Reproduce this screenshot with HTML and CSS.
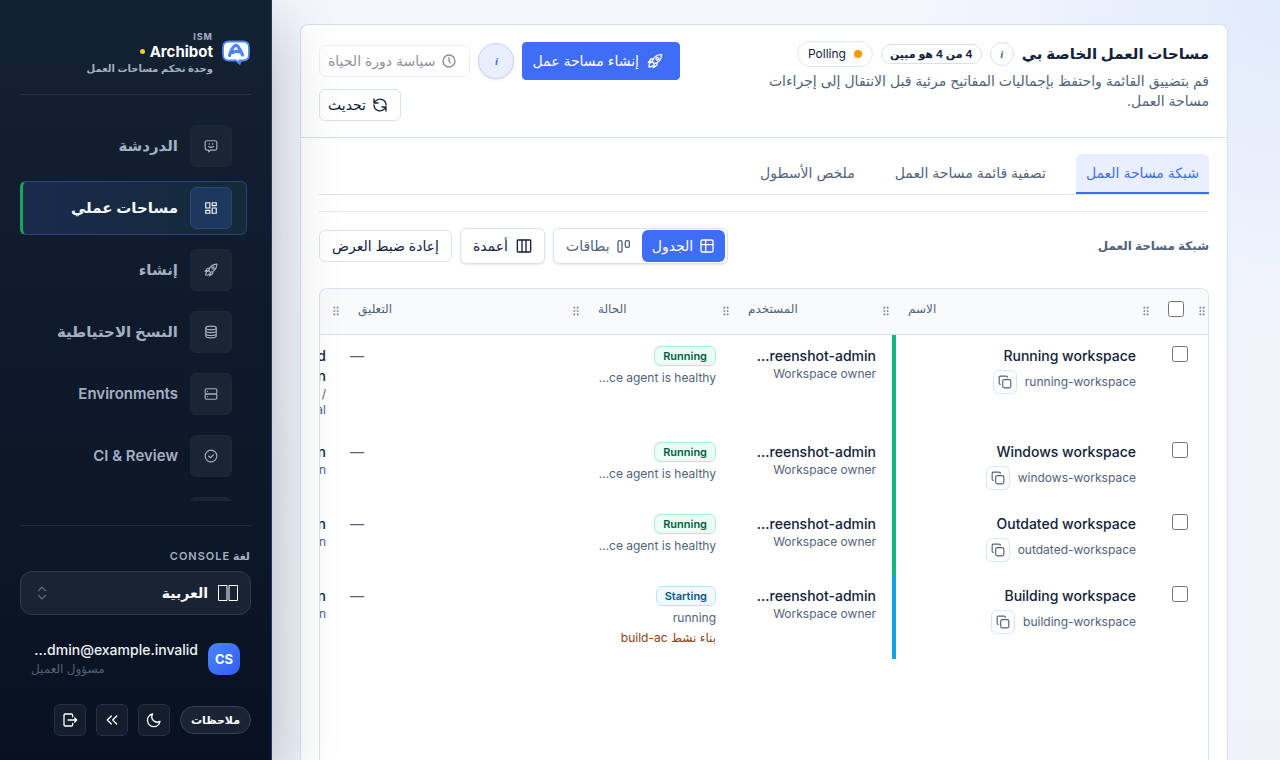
FILE: index.html
```html
<!DOCTYPE html>
<html lang="ar" dir="rtl">
<head>
<meta charset="utf-8">
<title>Archibot</title>
<link rel="stylesheet" href="styles.css">
</head>
<body>
<svg class="defs" aria-hidden="true">
  <symbol id="rocket" viewBox="0 0 24 24"><path d="M8 13C9.500 6.500 14 2.500 22 2c-.5 8-4.500 12.500-11 14z"/><path d="M9.500 9H6l-4 5.500 6-1.500"/><path d="M15 14.500V18l-5.500 4 1.500-6"/><path d="M8 13c-3 .5-5 3.500-5 8 3 0 5-.5 6-2"/><circle cx="15.500" cy="8.500" r="2"/></symbol>
  <symbol id="copy" viewBox="0 0 24 24"><rect x="8" y="8" width="14" height="14" rx="3"/><path d="M4 16c-1.100 0-2-.9-2-2V4c0-1.100.9-2 2-2h10c1.100 0 2 .9 2 2"/></symbol>
  <symbol id="grip" viewBox="0 0 8 12"><path d="M1 1h2v2H1zM5 1h2v2H5zM1 5h2v2H1zM5 5h2v2H5zM1 9h2v2H1zM5 9h2v2H5z"/></symbol>
</svg>
<div class="shell">
  <main class="main">
    <section class="card">
      <header class="card-head">
        <div class="intro">
          <div class="title-row">
            <h1>مساحات العمل الخاصة بي</h1>
            <button class="info" aria-label="معلومات">i</button>
            <span class="pill strong">4 من 4 هو مبين</span>
            <span class="pill polling"><i class="dot"></i>Polling</span>
          </div>
          <p>قم بتضييق القائمة واحتفظ بإجماليات المفاتيح مرئية قبل الانتقال إلى إجراءات مساحة العمل.</p>
        </div>
        <div class="actions">
          <button class="btn primary"><svg class="icon"><use href="#rocket"/></svg>إنشاء مساحة عمل</button>
          <button class="info large" aria-label="معلومات">i</button>
          <button class="btn" disabled><svg class="icon" viewBox="0 0 24 24"><circle cx="12" cy="12" r="9"/><path d="M12 7v5l2 3"/></svg>سياسة دورة الحياة</button>
          <button class="btn"><svg class="icon" viewBox="0 0 24 24"><path d="M21 12a9 9 0 0 0-15-6.500L3 8M3 3v6h6M3 12a9 9 0 0 0 15 6.500l3-2.500M21 21v-6h-6"/></svg>تحديث</button>
        </div>
      </header>
      <div class="card-body">
        <nav class="tabs" role="tablist">
          <button class="tab active" role="tab">شبكة مساحة العمل</button>
          <button class="tab" role="tab">تصفية قائمة مساحة العمل</button>
          <button class="tab" role="tab">ملخص الأسطول</button>
        </nav>
        <div class="toolbar">
          <h2>شبكة مساحة العمل</h2>
          <div class="tools">
            <div class="segments">
              <button class="segment active"><svg class="icon" viewBox="0 0 24 24"><rect x="3" y="3" width="18" height="18" rx="2"/><path d="M10 3v18M3 10h18"/></svg>الجدول</button>
              <button class="segment"><svg class="icon" viewBox="0 0 24 24"><rect x="3" y="4" width="6" height="17" rx="2"/><rect x="14" y="4" width="6" height="10" rx="2"/></svg>بطاقات</button>
            </div>
            <button class="btn columns"><svg class="icon" viewBox="0 0 24 24"><rect x="2" y="3" width="20" height="18" rx="1"/><path d="M9 3v18M15 3v18"/></svg>أعمدة</button>
            <button class="btn reset">إعادة ضبط العرض</button>
          </div>
        </div>
        <div class="table-wrap">
          <table>
            <colgroup><col class="c-pick"><col class="c-name"><col class="c-user"><col class="c-state"><col class="c-note"><col class="c-extra"></colgroup>
            <thead>
              <tr>
                <th><div class="th pick"><svg class="grip"><use href="#grip"/></svg><input type="checkbox" aria-label="تحديد الكل"></div></th>
                <th><div class="th"><svg class="grip"><use href="#grip"/></svg><span>الاسم</span></div></th>
                <th><div class="th"><svg class="grip"><use href="#grip"/></svg><span>المستخدم</span></div></th>
                <th><div class="th"><svg class="grip"><use href="#grip"/></svg><span>الحالة</span></div></th>
                <th><div class="th"><svg class="grip"><use href="#grip"/></svg><span>التعليق</span></div></th>
                <th><div class="th"><svg class="grip"><use href="#grip"/></svg></div></th>
              </tr>
            </thead>
            <tbody>
              <tr class="tall">
                <td class="pick"><input type="checkbox" aria-label="Running workspace"></td>
                <td class="name ok"><strong>Running workspace</strong><div class="slug">running-workspace<button aria-label="نسخ"><svg class="icon"><use href="#copy"/></svg></button></div></td>
                <td><strong dir="ltr">…reenshot-admin</strong><small>Workspace owner</small></td>
                <td><span class="badge">Running</span><small class="detail" dir="ltr">…ce agent is healthy</small></td>
                <td class="note">—</td>
                <td><strong>d</strong><strong>n</strong><small>/</small><small>al</small></td>
              </tr>
              <tr>
                <td class="pick"><input type="checkbox" aria-label="Windows workspace"></td>
                <td class="name ok"><strong>Windows workspace</strong><div class="slug">windows-workspace<button aria-label="نسخ"><svg class="icon"><use href="#copy"/></svg></button></div></td>
                <td><strong dir="ltr">…reenshot-admin</strong><small>Workspace owner</small></td>
                <td><span class="badge">Running</span><small class="detail" dir="ltr">…ce agent is healthy</small></td>
                <td class="note">—</td>
                <td><strong>n</strong><small>n</small></td>
              </tr>
              <tr>
                <td class="pick"><input type="checkbox" aria-label="Outdated workspace"></td>
                <td class="name ok"><strong>Outdated workspace</strong><div class="slug">outdated-workspace<button aria-label="نسخ"><svg class="icon"><use href="#copy"/></svg></button></div></td>
                <td><strong dir="ltr">…reenshot-admin</strong><small>Workspace owner</small></td>
                <td><span class="badge">Running</span><small class="detail" dir="ltr">…ce agent is healthy</small></td>
                <td class="note">—</td>
                <td><strong>n</strong><small>n</small></td>
              </tr>
              <tr>
                <td class="pick"><input type="checkbox" aria-label="Building workspace"></td>
                <td class="name busy"><strong>Building workspace</strong><div class="slug">building-workspace<button aria-label="نسخ"><svg class="icon"><use href="#copy"/></svg></button></div></td>
                <td><strong dir="ltr">…reenshot-admin</strong><small>Workspace owner</small></td>
                <td><span class="badge starting">Starting</span><small class="detail">running</small><small class="detail build">بناء نشط build-ac</small></td>
                <td class="note">—</td>
                <td><strong>n</strong><small>n</small></td>
              </tr>
            </tbody>
          </table>
        </div>
      </div>
    </section>
  </main>

  <aside class="sidebar">
    <div class="brand">
      <svg class="logo" viewBox="0 0 28 26"><path d="M14 20h6l-2 5.500z" fill="#4d86f7"/><path d="M7 1.500h14q6 0 6 6v7q0 6-6 6h-3.500l-.5 2.500-3-2.500H7q-6 0-6-6v-7q0-6 6-6z" fill="#fff" stroke="#4d86f7" stroke-width="1.800"/><path d="M7.500 15.500q2-7 5-9.500 2-1.500 3.500.5 3 4 4.500 8.500M10.500 12.500q3.500-2 8-.5" fill="none" stroke="#4d86f7" stroke-width="3.200" stroke-linecap="round" stroke-linejoin="round"/></svg>
      <div class="brand-text">
        <span class="eyebrow">ISM</span>
        <span class="brand-name">Archibot<i></i></span>
        <span class="tagline">وحدة تحكم مساحات العمل</span>
      </div>
    </div>
    <nav class="nav">
      <a href="#"><span class="tile"><svg class="icon" viewBox="0 0 24 24"><path d="M5 3h14a3 3 0 0 1 3 3v10a3 3 0 0 1-3 3h-7l-4 3v-3H5a3 3 0 0 1-3-3V6a3 3 0 0 1 3-3zM9 8v1M15 8v1M8 13q4 3 8 0"/></svg></span>الدردشة</a>
      <a href="#" class="active"><span class="tile"><svg class="icon" viewBox="0 0 24 24"><path d="M3 3h7v9H3zM14 3h7v5h-7zM14 12h7v9h-7zM3 16h7v5H3z"/></svg></span>مساحات عملي</a>
      <a href="#"><span class="tile"><svg class="icon"><use href="#rocket"/></svg></span>إنشاء</a>
      <a href="#"><span class="tile"><svg class="icon" viewBox="0 0 24 24"><ellipse cx="12" cy="5" rx="9" ry="3"/><path d="M3 5v14c0 4 18 4 18 0V5M3 10c0 4 18 4 18 0M3 15c0 4 18 4 18 0"/></svg></span>النسخ الاحتياطية</a>
      <a href="#"><span class="tile"><svg class="icon" viewBox="0 0 24 24"><rect x="2" y="3" width="20" height="9" rx="2"/><rect x="2" y="12" width="20" height="9" rx="2"/><path d="M6 7.500h.01M6 16.500h.01"/></svg></span>Environments</a>
      <a href="#"><span class="tile"><svg class="icon" viewBox="0 0 24 24"><circle cx="12" cy="12" r="10"/><path d="m8 12 3 3 5-5"/></svg></span>CI &amp; Review</a>
      <a href="#" aria-label="المزيد"><span class="tile"></span></a>
    </nav>
    <div class="side-foot">
      <label for="lang">لغة CONSOLE</label>
      <div class="lang">
        <svg class="flag" viewBox="0 0 20 16" aria-hidden="true"><path d="M.5.5h8.500v15H.5zM11 .5h8.500v15H11z"/></svg>
        <select id="lang"><option>العربية</option></select>
        <svg class="icon" viewBox="0 0 24 24"><path d="m6 8 6-6 6 6M6 16l6 6 6-6"/></svg>
      </div>
      <div class="account">
        <span class="avatar">CS</span>
        <div class="who"><b dir="ltr">…dmin@example.invalid</b><span>مسؤول العميل</span></div>
      </div>
      <div class="foot-actions">
        <button class="feedback">ملاحظات</button>
        <button class="square" aria-label="الوضع الداكن"><svg class="icon" viewBox="0 0 24 24"><path d="M10 3a8 8 0 0 0 11 11 9.500 9.500 0 1 1-11-11z"/></svg></button>
        <button class="square" aria-label="طي"><svg class="icon" viewBox="0 0 24 24"><path d="m11 18-6-6 6-6M19 18l-6-6 6-6"/></svg></button>
        <button class="square" aria-label="تسجيل الخروج"><svg class="icon" viewBox="0 0 24 24"><path d="M16 7V5a2 2 0 0 0-2-2H5a2 2 0 0 0-2 2v14a2 2 0 0 0 2 2h9a2 2 0 0 0 2-2v-2M9 12h13M19 9l3 3-3 3"/></svg></button>
      </div>
    </div>
  </aside>
</div>
</body>
</html>
```
FILE: styles.css
```css
* { box-sizing: border-box; }
body { margin: 0; font-family: Inter, "DejaVu Sans", sans-serif; font-size: 14px; line-height: 20px; color: #13213a; }
button, select { font: inherit; color: inherit; cursor: pointer; }
.defs { position: absolute; width: 0; height: 0; }
.icon { width: 16px; height: 16px; flex: none; fill: none; stroke: currentColor; stroke-width: 2; stroke-linecap: round; stroke-linejoin: round; }

.shell { display: flex; flex-direction: row; height: 100vh; overflow: hidden; }
.main { flex: 1; min-width: 0; padding: 24px 52px 0 28px; background: radial-gradient(circle at 100% 0, #e2ebfb, transparent 360px), linear-gradient(180deg, #f3f6fd, #eff3f9); }

/* Sidebar */
.sidebar { position: relative; flex: none; width: 272px; display: flex; flex-direction: column; padding: 30px 20px 24px; border-right: 1px solid #1f3a62; background: linear-gradient(180deg, #132233 0%, #0f1a2d 38%, #0c1828 66%, #081022 100%); box-shadow: 0 24px 60px rgba(8, 16, 34, 0.28); color: #a3b0c2; }
.brand { display: flex; align-items: center; gap: 9px; padding-bottom: 18px; border-bottom: 1px solid #243243; }
.logo { width: 28px; height: 26px; margin-right: 1px; flex: none; }
.brand-text { display: flex; flex-direction: column; }
.eyebrow { font-size: 9px; line-height: 13px; font-weight: 700; letter-spacing: 1px; }
.brand-name { display: flex; align-items: center; gap: 5px; font-size: 15px; line-height: 17px; font-weight: 700; color: #fff; }
.brand-name i { width: 5px; height: 5px; border-radius: 50%; background: #facc15; }
.tagline { font-size: 10px; line-height: 16px; font-weight: 700; }
.nav { flex: 1; min-height: 0; overflow: hidden; display: flex; flex-direction: column; gap: 8px; margin: 24px 0; padding-right: 4px; }
.nav a { flex: none; display: flex; align-items: center; gap: 12px; padding: 5px 14px; border: 1px solid transparent; border-radius: 6px; color: inherit; text-decoration: none; font-size: 15px; font-weight: 600; }
.nav a.active { color: #f5f8ff; border-color: #24457c; border-left: 3px solid #16a85a; background: linear-gradient(90deg, #1a2a4d, #142a38); }
.tile { width: 42px; height: 42px; display: grid; place-items: center; border-radius: 6px; border: 1px solid #1c2737; background: #1a2435; }
.active .tile { background: #1d375e; border-color: #29466d; }
.tile .icon { width: 14px; height: 14px; }
.side-foot { border-top: 1px solid #1d2939; padding-top: 22px; }
.side-foot label { display: block; font-size: 11px; line-height: 16px; font-weight: 600; letter-spacing: 1px; padding: 0 1px; }
.lang { height: 44px; margin-top: 7px; display: flex; align-items: center; gap: 10px; padding: 0 12px; border: 1px solid #303a4a; border-radius: 12px; background: #1a2333; color: #fff; }
.flag { width: 20px; height: 16px; fill: none; stroke: #fff; stroke-width: 1; }
.lang select { flex: 1; min-width: 0; appearance: none; border: 0; padding: 0; background: transparent; font-size: 14px; font-weight: 600; }
.lang .icon { color: #64748b; margin-left: 2px; width: 14px; height: 14px; }
.account { display: flex; align-items: center; gap: 10px; margin-top: 25px; padding: 0 11px; }
.avatar { flex: none; width: 32px; height: 32px; border-radius: 10px; display: grid; place-items: center; background: linear-gradient(135deg, #4b85ff, #315df0); color: #fff; font-size: 13px; font-weight: 700; }
.who { flex: 1; min-width: 0; line-height: 20px; display: flex; flex-direction: column; }
.who b { font-size: 14px; font-weight: 500; color: #eef2f8; text-align: right; }
.who span { font-size: 12px; line-height: 18px; color: #526076; text-align: left; }
.foot-actions { display: flex; align-items: center; gap: 10px; margin-top: 26px; }
.foot-actions button { padding: 0; border: 1px solid #263142; background: #141d2c; color: #fff; }
.square { width: 32px; height: 32px; display: grid; place-items: center; border-radius: 6px; }
.foot-actions .feedback { height: 28px; padding: 0 10px; border-radius: 14px; border-color: #374151; background: #1a2333; font-size: 11px; font-weight: 600; }

/* Card */
.card { height: 100%; display: flex; flex-direction: column; border: 1px solid #d6dfee; border-bottom: 0; border-radius: 8px 8px 0 0; background: #fff; }
.card-head { display: flex; justify-content: space-between; padding: 16px 18px; border-bottom: 1px solid #d6dfee; }
.intro { flex: 0 1 446px; }
.title-row { display: flex; align-items: center; gap: 8px; }
h1 { margin: 0; font-size: 15px; line-height: 24px; font-weight: 600; }
p { margin: 4px 0 0; color: #53627a; }
.info { width: 24px; height: 24px; padding: 0; border: 1px solid #d6e0ef; border-radius: 50%; background: #fff; color: #53627a; font-family: "Liberation Serif", serif; font-size: 11px; font-style: italic; font-weight: 700; }
.info.large { width: 36px; height: 36px; border-color: #c5d3fb; background: #e9effe; color: #3f6df6; box-shadow: 0 1px 2px rgba(15, 23, 42, 0.1); }
.pill { display: flex; align-items: center; gap: 8px; padding: 0 10px; border: 1px solid #dfe7f3; border-radius: 13px; font-size: 12px; line-height: 24px; }
.pill.strong { padding: 0 8px; font-size: 11px; font-weight: 600; line-height: 18px; border-color: #d6e0ef; }
.dot { width: 8px; height: 8px; border-radius: 50%; background: #ff9800; }
.actions { flex: 0 0 362px; display: flex; flex-wrap: wrap; justify-content: flex-end; align-items: center; align-content: flex-start; gap: 9px 8px; padding-top: 1px; }
.btn { height: 32px; display: flex; align-items: center; gap: 6px; padding: 0 12px 0 8px; border: 1px solid #d9e3f2; border-radius: 6px; background: #fff; }
.btn:disabled { opacity: 0.5; color: #13213a; }
.btn.primary { height: 38px; gap: 8px; padding: 0 16px 0 9px; border-color: #3f6df6; border-radius: 4px; background: #3f6df6; color: #fff; }
.card-body { flex: 1; min-height: 0; display: flex; flex-direction: column; padding: 16px 18px 0; }
.tabs { display: flex; gap: 20px; border-bottom: 1px solid #dde6f1; }
.tab { height: 40px; padding: 0 10px; border: 0; border-bottom: 2px solid transparent; border-radius: 6px 6px 0 0; background: none; color: #53627a; }
.tab.active { color: #3f6df6; background: #e9effe; border-bottom-color: #3f6df6; }
.toolbar { display: flex; justify-content: space-between; align-items: center; margin-top: 16px; padding: 16px 0 24px; border-top: 1px solid #e4eaf3; }
h2 { margin: 0; font-size: 12px; font-weight: 600; color: #53627a; }
.tools { display: flex; align-items: center; gap: 8px; }
.segments { display: flex; height: 36px; padding: 1px 2px; border: 1px solid #d9e3f2; border-radius: 6px; box-shadow: 0 1px 2px rgba(15, 23, 42, 0.1); }
.segment { height: 32px; display: flex; align-items: center; gap: 6px; padding: 0 10px; border: 0; border-radius: 6px; background: none; color: #53627a; }
.segment.active { background: #3f6df6; color: #fff; }
.btn.columns { height: 36px; gap: 8px; padding: 0 12px; box-shadow: 0 1px 2px rgba(15, 23, 42, 0.1); }
.btn.reset { padding: 0 12px; }

/* Table */
.table-wrap { flex: 1; min-height: 0; overflow: hidden; border: 1px solid #d9e3f2; border-bottom: 0; border-radius: 8px 8px 0 0; }
table { width: 1066px; table-layout: fixed; border-collapse: separate; border-spacing: 0; }
.c-pick { width: 56px; }
.c-name { width: 260px; }
.c-user { width: 160px; }
.c-state { width: 150px; }
.c-note { width: 240px; }
.c-extra { width: 200px; }
th { height: 46px; padding: 0; background: #f8fafc; border-bottom: 1px solid #d9e3f2; color: #53627a; font-size: 12px; font-weight: 500; }
.th { display: flex; align-items: center; justify-content: space-between; padding: 0 2px 6px 16px; }
.grip { width: 8px; height: 10px; margin-top: 4px; fill: #71809a; }
input[type="checkbox"] { width: 16px; height: 16px; margin: 0; }
td { height: 72px; padding: 11px 16px 9px; vertical-align: top; }
.tall td { height: 96px; }
tr:last-child td { height: 84px; }
td.pick { padding: 11px 20px; line-height: 0; }
td strong, td small { display: block; white-space: nowrap; text-align: right; }
td strong { font-weight: 500; }
td small { font-size: 12px; line-height: 16px; color: #53627a; }
td .detail { line-height: 20px; margin-top: 2px; }
td .detail.build { margin-top: 0; color: #92400e; }
td.name { border-left: 4px solid #10b981; padding-left: 16px; }
td.name.busy { border-left-color: #0ea5e9; }
.slug { display: flex; align-items: center; gap: 8px; margin-top: 4px; font-size: 12px; color: #53627a; }
.slug button { width: 24px; height: 24px; padding: 0; display: grid; place-items: center; border: 1px solid #d9e3f2; border-radius: 6px; background: #fff; color: inherit; }
.slug .icon { width: 14px; height: 14px; }
.badge { display: block; width: fit-content; padding: 0 8px; border: 1px solid #a7f3d0; border-radius: 6px; background: #ecfdf5; color: #065f46; font-size: 11px; font-weight: 600; line-height: 18px; }
.badge.starting { border-color: #bae6fd; background: #f0f9ff; color: #075985; }
td.note { padding-left: 8px; text-align: left; color: #53627a; }
```
